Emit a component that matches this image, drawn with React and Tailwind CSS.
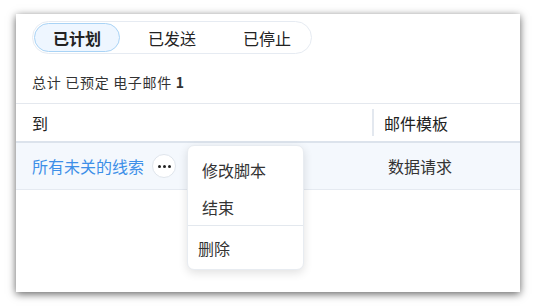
export default function App() {
  const font = { fontFamily: '"Noto Sans CJK SC", "Noto Sans", sans-serif' };
  return (
    <div className="w-[536px] h-[306px] bg-white pt-[14px] pl-[16px]" style={font}>
      <div className="relative w-[504px] h-[278px] bg-white shadow-[0_2px_8px_rgba(0,0,0,0.62)]">
        <div className="px-[16px] pt-[7px]">
          <div className="inline-flex items-center gap-[9px] h-[33px] w-[280px] rounded-full border border-[#e6ebf2] px-[1px]">
            <div className="flex items-center justify-center w-[86px] h-[29px] rounded-full bg-[#eef6ff] border border-[#a9d3f5] text-[16px] font-bold text-[#222]">已计划</div>
            <div className="flex items-center justify-center w-[86px] h-[29px] text-[16px] text-[#222]">已发送</div>
            <div className="flex items-center justify-center w-[86px] h-[29px] text-[16px] text-[#222]">已停止</div>
          </div>
          <div className="mt-[18px] text-[14px] leading-[20px] text-[#333] tracking-[0.7px]">总计 已预定 电子邮件 <span className="font-bold">1</span></div>
        </div>
        <div className="mt-[11px] border-t border-[#e4e8ee]">
          <div className="flex h-[39px] items-center border-b-2 border-[#dce3ec]">
            <div className="w-[356px] pl-[16px] text-[16px] text-[#222]">到</div>
            <div className="w-[2px] h-[27px] bg-[#e3e8ef]"></div>
            <div className="pl-[10px] text-[16px] text-[#222]">邮件模板</div>
          </div>
          <div className="flex h-[47px] items-center bg-[#f4f8fd] border-b border-[#e5eaf1]">
            <div className="w-[358px] pl-[16px] flex items-center">
              <span className="text-[16px] text-[#3d8fe8]">所有未关的线索</span>
              <span className="ml-[8px] flex items-center justify-center w-[24px] h-[24px] rounded-full bg-white border border-[#dfe5ec] gap-[2px]">
                <span className="w-[3px] h-[3px] rounded-full bg-[#222]"></span>
                <span className="w-[3px] h-[3px] rounded-full bg-[#222]"></span>
                <span className="w-[3px] h-[3px] rounded-full bg-[#222]"></span>
              </span>
            </div>
            <div className="pl-[14px] text-[16px] text-[#333]">数据请求</div>
          </div>
        </div>
        <div className="absolute left-[171px] top-[131px] w-[117px] h-[125px] rounded-[7px] bg-white border border-[#e8ecf1] shadow-[0_3px_10px_rgba(0,0,0,0.12)] text-[16px] text-[#333]">
          <div className="pl-[14px] pt-[12px] leading-[25px]">修改脚本</div>
          <div className="pl-[14px] pt-[12px] leading-[25px]">结束</div>
          <div className="mt-[5px] border-t border-[#e3e8ee]"></div>
          <div className="pl-[10px] pt-[10px] leading-[25px]">删除</div>
        </div>
      </div>
    </div>
  );
}
